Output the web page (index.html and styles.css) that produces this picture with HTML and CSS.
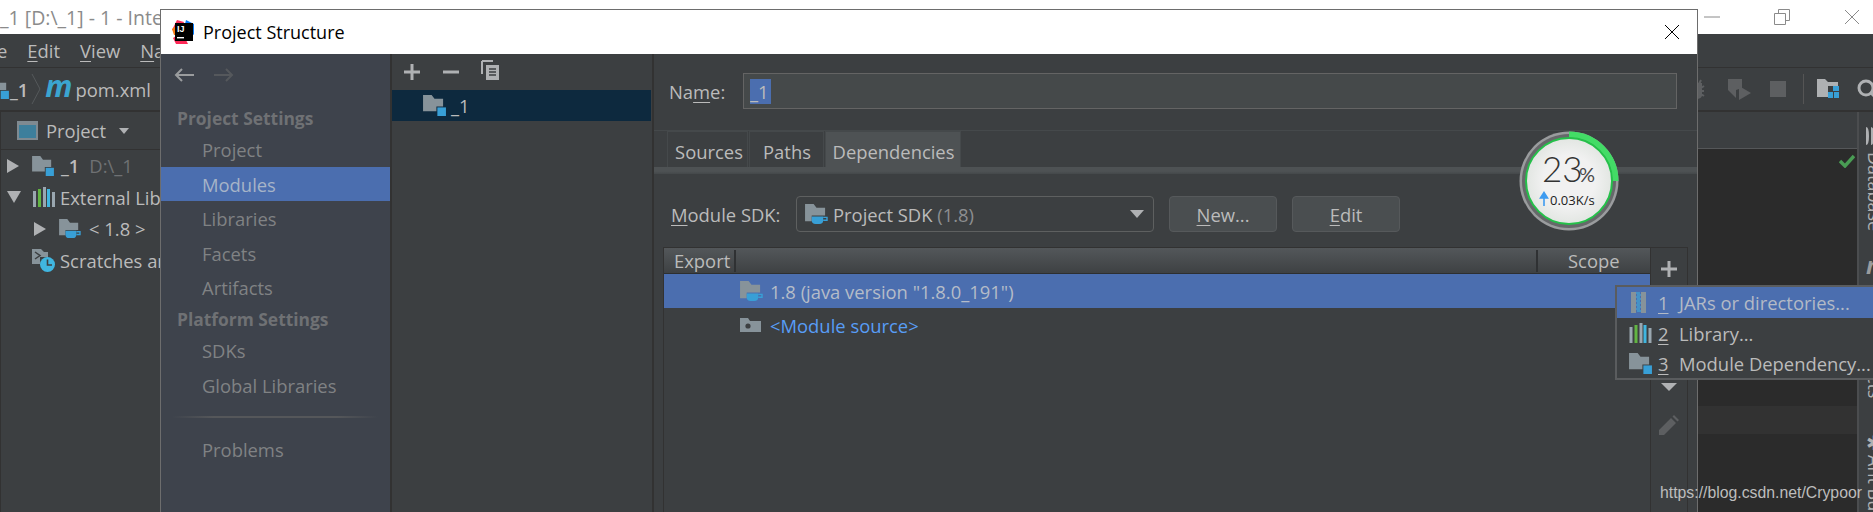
FILE: index.html
```html
<!DOCTYPE html>
<html lang="en">
<head>
<meta charset="utf-8">
<title>Project Structure</title>
<link rel="stylesheet" href="styles.css">
</head>
<body>
<svg class="sprite" aria-hidden="true">
  <symbol id="i-module" viewBox="0 0 24 22">
    <path d="M0 0H9L12 4H21V12H14V17H0Z" fill="#87939a"/>
    <rect x="15" y="13" width="9" height="9" fill="#389fd6"/>
  </symbol>
  <symbol id="i-sdk" viewBox="0 0 24 22">
    <path d="M0 0H9L12 4H21V12H7V18H0Z" fill="#87939a"/>
    <path d="M7 13H19V17Q19 21 15 21H11Q7 21 7 17Z" fill="#389fd6"/>
    <path d="M19 14H23V17H19" fill="none" stroke="#389fd6" stroke-width="1.5"/>
  </symbol>
  <symbol id="i-source" viewBox="0 0 21 14">
    <path d="M0 0H8L10 3H21V14H0Z" fill="#87939a"/>
    <circle cx="8" cy="8" r="2.6" fill="#3c3f41"/>
  </symbol>
  <symbol id="i-lib" viewBox="0 0 22 20">
    <rect x="0" y="4" width="3" height="16" fill="#9aa7b0"/>
    <rect x="5" y="2" width="3" height="18" fill="#62b543"/>
    <rect x="10" y="0" width="3" height="20" fill="#9aa7b0"/>
    <rect x="14" y="2" width="3" height="18" fill="#40b6e0"/>
    <rect x="19" y="5" width="3" height="15" fill="#9aa7b0"/>
  </symbol>
  <symbol id="i-jar" viewBox="0 0 15 21">
    <rect x="0" y="0" width="5" height="21" fill="#87939a"/>
    <rect x="10" y="0" width="5" height="21" fill="#87939a"/>
    <path d="M5 1H9M6 3H10M5 5H9M6 7H10M5 9H9M6 11H10M5 13H9M6 15H10M5 17H9M6 19H10" stroke="#40b6e0" stroke-width="1.2"/>
  </symbol>
  <symbol id="i-scratch" viewBox="0 0 23 23">
    <path d="M0 0H9L12 3H16V8H8V15H0Z" fill="#87939a"/>
    <path d="M3 3L8 6.5L3 10" fill="none" stroke="#3c3f41" stroke-width="1.5"/>
    <circle cx="15.5" cy="15.5" r="7.5" fill="#40b6e0"/>
    <path d="M15.5 10.5V16H20" fill="none" stroke="#3c3f41" stroke-width="1.6"/>
  </symbol>
  <symbol id="i-plus" viewBox="0 0 16 16">
    <path d="M8 0V16M0 8H16" stroke="currentColor" stroke-width="3"/>
  </symbol>
</svg>

<div class="ide">
  <header class="titlebar">
    <span class="titlebar-text">_1 [D:\_1] - 1 - IntelliJ IDEA</span>
    <div class="wincontrols">
      <svg class="winbtn" viewBox="0 0 16 16"><path d="M0 8H16" stroke="#8a8a8a"/></svg>
      <svg class="winbtn" viewBox="0 0 16 16"><path d="M.5 4.5H11.5V15.5H.5Z M4.5 4.5V.5H15.5V11.5H11.5" fill="none" stroke="#8a8a8a"/></svg>
      <svg class="winbtn" viewBox="0 0 16 16"><path d="M1 1L15 15M15 1L1 15" stroke="#8a8a8a"/></svg>
    </div>
  </header>
  <nav class="menubar">
    <span class="menu-clip">e</span>
    <span><u>E</u>dit</span>
    <span><u>V</u>iew</span>
    <span><u>N</u>avigate</span>
  </nav>
  <div class="navbar">
    <div class="crumbs">
      <svg class="crumb-icon"><use href="#i-module"/></svg>
      <b class="crumb-name">_1</b>
      <svg class="chev" viewBox="0 0 10 32"><path d="M1 1L9 16L1 31" fill="none" stroke="#55595b"/></svg>
      <i class="maven">m</i>
      <span>pom.xml</span>
    </div>
    <div class="tools">
      <svg class="tool-bug" viewBox="0 0 20 20"><path d="M5 5H15V16Q15 19 10 19T5 16Z M2 7L5 9M2 12H5M2 17L5 15M18 7L15 9M18 12H15M18 17L15 15M7 5L5 1M13 5L15 1" fill="#5d5f61" stroke="#5d5f61" stroke-width="2"/></svg>
      <svg class="tool-cov" viewBox="0 0 23 22"><path d="M0 1H14V10L8 12V20L0 12Z" fill="#5d5f61"/><path d="M11 8L23 15L11 22Z" fill="#5d5f61"/></svg>
      <span class="tool-stop"></span>
      <span class="tool-sep"></span>
      <svg class="tool-folder" viewBox="0 0 22 20"><path d="M0 0H8L11 3H21V7H11V18H0Z" fill="#afb1b3"/><path d="M16 7H22V12H16ZM11 13H16V19H11ZM17 13H22V19H17Z" fill="#389fd6"/></svg>
      <svg class="tool-search" viewBox="0 0 20 20"><circle cx="9" cy="9" r="7" fill="none" stroke="#afb1b3" stroke-width="3"/><path d="M14 14L20 20" stroke="#afb1b3" stroke-width="3"/></svg>
    </div>
  </div>
  <div class="workspace">
    <aside class="project">
      <div class="project-head">
        <span class="project-glyph"></span>
        <span>Project</span>
        <span class="caret"></span>
      </div>
      <div class="tree-row"><span class="tri-r"></span><svg class="tree-icon"><use href="#i-module"/></svg><b class="tree-bold">_1</b><span class="tree-dim">D:\_1</span></div>
      <div class="tree-row"><span class="tri-d"></span><svg class="tree-icon tree-lib"><use href="#i-lib"/></svg><span>External Libraries</span></div>
      <div class="tree-row tree-sub"><span class="tri-r"></span><svg class="tree-icon"><use href="#i-sdk"/></svg><span>&lt; 1.8 &gt;</span></div>
      <div class="tree-row"><svg class="tree-icon tree-scratch"><use href="#i-scratch"/></svg><span>Scratches and Consoles</span></div>
    </aside>
    <main class="editor">
      <div class="editor-tabs"></div>
      <div class="editor-body">
        <svg class="check" viewBox="0 0 16 14"><path d="M1 7L6 12L15 2" fill="none" stroke="#499c54" stroke-width="3.4"/></svg>
        <div class="caret-line"></div>
      </div>
    </main>
    <aside class="strip">
      <svg class="strip-db" viewBox="0 0 18 18"><path d="M0 0Q3 0 3 9T0 18ZM5 0Q8 0 8 9T5 18ZM10 0Q13 0 13 9T10 18Z" fill="#afb1b3"/></svg>
      <span class="strip-label strip-database">Database</span>
      <i class="strip-m">m</i>
      <span class="strip-label strip-facts">Artifacts</span>
      <span class="strip-ant">✱</span>
      <span class="strip-label">Ant Build</span>
    </aside>
  </div>
</div>

<section class="dialog">
  <header class="dialog-title">
    <svg class="logo" viewBox="0 0 22 24">
      <path d="M5 0L12 2L9 12L0 10Z" fill="#fe315d"/>
      <path d="M0 9L5 5L7 15L2 15Z" fill="#f97a12"/>
      <path d="M14 0L22 4V15L12 8Z" fill="#087cfa"/>
      <path d="M1 18L10 12L16 24H4Z" fill="#fe2857"/>
      <rect x="3" y="3" width="18" height="18" fill="#000"/>
      <text class="logo-text" x="5" y="12">IJ</text>
      <rect x="5" y="17" width="7" height="1.4" fill="#fff"/>
    </svg>
    <span class="dialog-name">Project Structure</span>
    <svg class="dialog-close" viewBox="0 0 16 16"><path d="M1 1L15 15M15 1L1 15" stroke="#000"/></svg>
  </header>
  <div class="dialog-body">
    <nav class="sidebar">
      <div class="history">
        <svg class="hist" viewBox="0 0 20 14"><path d="M20 7H2M8 1L2 7L8 13" fill="none" stroke="#9a9c9e" stroke-width="2"/></svg>
        <svg class="hist" viewBox="0 0 20 14"><path d="M0 7H18M12 1L18 7L12 13" fill="none" stroke="#55585c" stroke-width="2"/></svg>
      </div>
      <div class="side-head">Project Settings</div>
      <a class="side-item">Project</a>
      <a class="side-item is-selected">Modules</a>
      <a class="side-item">Libraries</a>
      <a class="side-item">Facets</a>
      <a class="side-item">Artifacts</a>
      <div class="side-head side-head-2">Platform Settings</div>
      <a class="side-item">SDKs</a>
      <a class="side-item">Global Libraries</a>
      <div class="side-sep"></div>
      <a class="side-item">Problems</a>
    </nav>
    <div class="modules">
      <div class="modules-tools">
        <svg class="mt-plus"><use href="#i-plus"/></svg>
        <svg class="mt-minus" viewBox="0 0 16 4"><path d="M0 2H16" stroke="#afb1b3" stroke-width="3"/></svg>
        <svg class="mt-copy" viewBox="0 0 18 20"><path d="M1 1H12" stroke="#afb1b3" stroke-width="2" fill="none"/><path d="M1 1V14" stroke="#afb1b3" stroke-width="2"/><path d="M5 5H18V20H5Z" fill="#afb1b3"/><path d="M8 9H15M8 12H15M8 15H15" stroke="#3c3f41" stroke-width="1.3"/></svg>
      </div>
      <div class="module-row"><svg class="module-icon"><use href="#i-module"/></svg><span>_1</span></div>
    </div>
    <div class="detail">
      <div class="name-row">
        <label class="name-label">Na<u>m</u>e:</label>
        <div class="name-input"><span class="name-sel">_1</span></div>
      </div>
      <div class="tabs">
        <span class="tab tab-sources">Sources</span>
        <span class="tab tab-paths">Paths</span>
        <span class="tab tab-deps is-active">Dependencies</span>
      </div>
      <div class="tab-band"></div>
      <div class="sdk-row">
        <label class="sdk-label"><u>M</u>odule SDK:</label>
        <div class="sdk-select">
          <svg class="sdk-icon"><use href="#i-sdk"/></svg>
          <span>Project SDK <span class="muted">(1.8)</span></span>
          <span class="sdk-caret"></span>
        </div>
        <button class="btn"><u>N</u>ew...</button>
        <button class="btn"><u>E</u>dit</button>
      </div>
      <div class="deps">
        <div class="table">
          <div class="thead">
            <span class="th-export">Export</span>
            <span class="th-fill"></span>
            <span class="th-scope">Scope</span>
          </div>
          <div class="trow is-selected"><svg class="dep-icon"><use href="#i-sdk"/></svg><span>1.8 (java version "1.8.0_191")</span></div>
          <div class="trow"><svg class="dep-src"><use href="#i-source"/></svg><span class="link">&lt;Module source&gt;</span></div>
        </div>
        <div class="table-tools">
          <svg class="tt-plus"><use href="#i-plus"/></svg>
          <span class="tt-down"></span>
          <svg class="tt-edit" viewBox="0 0 20 20"><path d="M0 20V15L12 3L17 8L5 20Z M13.5 1.5L15 0L20 5L18.5 6.5Z" fill="#5d5f61"/></svg>
        </div>
      </div>
    </div>
  </div>
</section>

<svg class="speed" viewBox="0 0 100 100">
  <defs>
    <radialGradient id="disc"><stop offset="0.6" stop-color="#f1f1f1"/><stop offset="1" stop-color="#e2e6e2"/></radialGradient>
  </defs>
  <circle cx="50" cy="50" r="49.5" fill="#9a9c9e"/>
  <circle cx="50" cy="50" r="47" fill="#66686a"/>
  <path d="M50 3.5A46.5 46.5 0 0 1 96.5 50" fill="none" stroke="#43dc66" stroke-width="6"/>
  <circle cx="50" cy="50" r="43" fill="url(#disc)" stroke="#25c04a" stroke-width="2"/>
  <text class="speed-num" x="23" y="51">23</text>
  <text class="speed-pct" x="60" y="51">%</text>
  <path d="M25 75V66M21.5 67L25 61.5L28.5 67Z" stroke="#3d9bf0" stroke-width="1.6" fill="#3d9bf0"/>
  <text class="speed-rate" x="31" y="74">0.03K/s</text>
</svg>

<div class="popup">
  <div class="pop-row is-selected"><svg class="pop-jar"><use href="#i-jar"/></svg><u class="pop-num">1</u><span>JARs or directories...</span></div>
  <div class="pop-row"><svg class="pop-icon pop-lib"><use href="#i-lib"/></svg><u class="pop-num">2</u><span>Library...</span></div>
  <div class="pop-row"><svg class="pop-icon"><use href="#i-module"/></svg><u class="pop-num">3</u><span>Module Dependency...</span></div>
</div>

<div class="watermark">https://blog.csdn.net/Crypoor</div>
</body>
</html>
```
FILE: styles.css
```css
* { box-sizing: border-box; }
html, body { margin: 0; height: 512px; overflow: hidden; }
body {
  position: relative;
  width: 1873px;
  background: #3c3f41;
  color: #bbbbbb;
  font-family: "Open Sans", "Noto Sans", "Liberation Sans", sans-serif;
  font-size: 18.4px;
}
u { text-underline-offset: 3px; }
.sprite { display: none; }

/* IDE behind the dialog */
.ide { display: flex; flex-direction: column; height: 512px; }
.titlebar {
  height: 34px; flex: none; background: #fff; color: #8b8b8b;
  display: flex; align-items: center; justify-content: space-between;
  font-size: 19.5px; white-space: nowrap;
}
.wincontrols { display: flex; align-items: center; gap: 54px; padding-right: 13px; }
.winbtn { width: 16px; height: 16px; display: block; }
.menubar {
  height: 34px; flex: none; border-bottom: 1px solid #323232;
  display: flex; align-items: center; gap: 20px; color: #bbb;
  white-space: nowrap;
}
.menubar .menu-clip { margin-left: -3px; }
.navbar {
  height: 44px; flex: none; border-bottom: 2px solid #323232;
  display: flex; align-items: center; justify-content: space-between;
}
.crumbs { display: flex; align-items: center; white-space: nowrap; }
.crumb-icon { width: 22px; height: 20px; margin-left: -13px; }
.crumb-name { margin-left: 1px; font-weight: 600; }
.chev { width: 10px; height: 32px; margin: 0 4px 0 3px; }
.maven { color: #3ba5d0; font: italic 700 30px/1 "Open Sans", sans-serif; margin: -6px 3px 0 0; }
.tools { display: flex; align-items: center; }
.tool-bug { width: 20px; height: 20px; margin-right: 22px; }
.tool-cov { width: 23px; height: 22px; margin-right: 19px; }
.tool-stop { width: 16px; height: 16px; background: #5d5f61; margin-right: 17px; }
.tool-sep { width: 1px; height: 30px; background: #555; margin-right: 13px; }
.tool-folder { width: 22px; height: 20px; margin-right: 18px; }
.tool-search { width: 20px; height: 20px; margin-right: -4px; }
.workspace { flex: 1; display: flex; min-height: 0; }

.project { width: 1697px; flex: none; border-left: 1px solid #323232; overflow: hidden; }
.project-head {
  height: 38px; border-bottom: 1px solid #323232;
  display: flex; align-items: center; gap: 8px; padding-left: 16px;
}
.project-glyph { width: 21px; height: 19px; background: #3d7f9c; border: 2px solid #7f8a91; border-top-width: 4px; }
.caret { width: 0; height: 0; border: 5px solid transparent; border-top: 6px solid #afb1b3; margin: 6px 0 0 5px; }
.tree-row { height: 31.5px; display: flex; align-items: center; white-space: nowrap; padding-left: 6px; }
.tree-sub { padding-left: 33px; }
.tri-r { width: 0; height: 0; border: 7px solid transparent; border-left: 12px solid #afb1b3; border-right: 0; margin-right: 13px; }
.tri-d { width: 0; height: 0; border: 7px solid transparent; border-top: 12px solid #afb1b3; border-bottom: 0; margin-right: 12px; }
.tree-icon { width: 22px; height: 20px; margin-right: 7px; flex: none; }
.tree-lib { margin-right: 5px; }
.tree-sub .tree-icon { margin-right: 8px; }
.tree-scratch { width: 23px; height: 23px; margin-left: 25px; margin-right: 5px; }
.tree-bold { font-weight: 600; margin-right: 10px; }
.tree-dim { color: #6f7173; }

.editor { width: 160px; flex: none; display: flex; flex-direction: column; }
.editor-tabs { height: 37px; flex: none; border-bottom: 1px solid #555759; }
.editor-body { flex: 1; background: #2b2b2b; padding-top: 0; display: flex; flex-direction: column; }
.check { width: 16px; height: 14px; align-self: flex-end; margin: 5px 2px 0 0; }
.caret-line { height: 28px; background: #323232; margin-top: 238px; }

.strip {
  width: 16px; flex: none; border-left: 2px solid #4b4d4f; overflow: hidden;
  display: flex; flex-direction: column; align-items: flex-start; padding-left: 7px; color: #afb1b3;
}
.strip-db { width: 18px; height: 18px; flex: none; margin: 15px 0 0 0; }
.strip-label { writing-mode: vertical-rl; white-space: nowrap; font-size: 18px; line-height: 18px; flex: none; }
.strip-database { margin-top: 7px; }
.strip-m { font: italic 700 24px/1 "Open Sans", sans-serif; flex: none; margin-top: 22px; color: #9a9c9e; }
.strip-facts { margin-top: 52px; }
.strip-ant { font-size: 20px; line-height: 24px; flex: none; margin-top: 32px; }

/* Dialog */
.dialog {
  position: absolute; left: 160px; top: 9px; width: 1538px; height: 503px;
  border: 1px solid #6d6d6d; border-bottom: 0; background: #3c3f41;
  display: flex; flex-direction: column;
}
.dialog-title {
  height: 44px; flex: none; background: #fff; color: #000;
  display: flex; align-items: center; padding-left: 11px; font-size: 18px;
}
.logo { width: 22px; height: 24px; margin-right: 9px; }
.logo-text { font: 700 9px "Liberation Sans", sans-serif; fill: #fff; }
.dialog-name { flex: 1; }
.dialog-close { width: 16px; height: 16px; margin-right: 17px; }
.dialog-body { flex: 1; display: flex; min-height: 0; }

.sidebar {
  width: 231px; flex: none; background: #3e434c; color: #808284;
  border-right: 2px solid #323232; display: flex; flex-direction: column;
}
.history { height: 50px; flex: none; display: flex; align-items: center; gap: 20px; padding: 0 0 8px 13px; }
.hist { width: 20px; height: 14px; }
.side-head { height: 28px; flex: none; line-height: 29px; padding-left: 16px; font-weight: 700; font-size: 17.4px; color: #6f7174; }
.side-item { height: 34.6px; flex: none; line-height: 35px; padding-left: 41px; display: block; }
.side-item.is-selected { background: #4b6eaf; color: #a6b4c8; }
.side-sep {
  height: 2px; flex: none; margin: 14px 12px 14px 11px;
  background: linear-gradient(90deg, #3e434c, #55575a 20%, #55575a 80%, #3e434c);
}

.modules { width: 262px; flex: none; border-right: 2px solid #323232; }
.modules-tools { height: 36px; display: flex; align-items: center; padding: 0 0 0 12px; color: #afb1b3; }
.mt-plus { width: 16px; height: 16px; margin-right: 23px; }
.mt-minus { width: 16px; height: 4px; margin-right: 22px; }
.mt-copy { width: 18px; height: 20px; margin-top: -4px; }
.module-row { height: 31px; background: #0d293e; display: flex; align-items: center; padding-left: 31px; margin-right: 1px; }
.module-icon { width: 23px; height: 21px; margin-right: 5px; }

.detail { flex: 1; min-width: 0; display: flex; flex-direction: column; }
.name-row { margin-top: 19px; height: 36px; flex: none; display: flex; align-items: center; padding: 0 20px 0 15px; }
.name-label { width: 74px; flex: none; }
.name-input { flex: 1; height: 36px; background: #45494a; border: 1px solid #646464; padding-left: 6px; display: flex; align-items: center; }
.name-sel { background: #4b6eaf; width: 21px; height: 25px; line-height: 25px; overflow: hidden; white-space: nowrap; }
.tabs { margin-top: 21px; height: 37px; flex: none; display: flex; padding-left: 13px; border-top: 1px solid #45494b; }
.tab { display: flex; align-items: center; justify-content: center; padding: 3px 0 0 1px; background: #3c3f41; border: 1px solid #45494b; border-bottom: 0; }
.tab-sources { width: 81px; margin-right: 1px; padding-left: 3px; }
.tab-paths { width: 75px; margin-right: 1px; }
.tab-deps { width: 136px; }
.tab.is-active { background: #4e5254; }
.tab-band { height: 7px; flex: none; background: linear-gradient(#4e5254 60%, #44484a); }
.sdk-row { margin-top: 22px; height: 36px; flex: none; display: flex; align-items: center; padding-left: 17px; }
.sdk-label { width: 125px; flex: none; }
.sdk-select {
  width: 358px; height: 36px; flex: none; border: 1px solid #5e6060; border-radius: 4px;
  display: flex; align-items: center; padding-left: 8px; background: #3c3f41; margin-right: 15px;
}
.sdk-icon { width: 23px; height: 21px; margin-right: 5px; flex: none; }
.sdk-caret { width: 0; height: 0; border: 7px solid transparent; border-top: 8px solid #afb1b3; border-bottom: 0; margin-left: auto; margin-right: 9px; }
.muted { color: #8c8e90; }
.btn {
  width: 108px; height: 36px; flex: none; margin-right: 15px; padding: 0;
  font: inherit; color: #bbb; background: #4a4e50; border: 1px solid #56595b; border-radius: 4px;
}
.deps { margin-top: 15px; flex: 1; min-height: 0; display: flex; padding: 0 9px 0 9px; }
.table { flex: 1; min-width: 0; border-left: 1px solid #323232; border-top: 1px solid #323232; }
.thead {
  height: 26px; display: flex; align-items: center;
  background: linear-gradient(#53575a, #3e4143); border-bottom: 1px solid #2d2f30;
}
.th-export { width: 72px; flex: none; padding-left: 10px; border-right: 2px solid #2f3133; line-height: 22px; }
.th-fill { flex: 1; }
.th-scope { width: 114px; flex: none; padding-left: 30px; border-left: 2px solid #2f3133; line-height: 22px; }
.trow { height: 34px; display: flex; align-items: center; padding-left: 76px; white-space: nowrap; }
.trow.is-selected { background: #4b6eaf; color: #b5bcc8; }
.dep-icon { width: 23px; height: 21px; margin-right: 7px; }
.dep-src { width: 21px; height: 14px; margin-right: 9px; }
.link { color: #589df6; }
.table-tools {
  width: 38px; flex: none; border: 1px solid #323232; border-bottom: 0;
  display: flex; flex-direction: column; align-items: center; color: #afb1b3; padding-top: 13px;
}
.tt-plus { width: 16px; height: 16px; }
.tt-down { width: 0; height: 0; border: 8px solid transparent; border-top: 8px solid #afb1b3; border-bottom: 0; margin-top: 106px; }
.tt-edit { width: 20px; height: 20px; margin-top: 24px; }

/* Overlays */
.speed { position: absolute; left: 1519px; top: 131px; width: 100px; height: 100px; }
.speed-num { font: 300 35px "Lato", sans-serif; fill: #333; }
.speed-pct { font: 400 20px "Lato", sans-serif; fill: #4a4a4a; }
.speed-rate { font: 400 13px "Open Sans", sans-serif; fill: #222; }

.popup {
  position: absolute; left: 1615px; top: 285px; width: 260px; height: 95px;
  background: #3c3f41; border: 2px solid #5a5c5e;
}
.pop-row { height: 30px; display: flex; align-items: center; white-space: nowrap; }
.pop-row.is-selected { height: 31px; background: #4b6eaf; color: #b3bac6; }
.pop-icon { width: 23px; height: 21px; margin-left: 12px; margin-right: 6px; flex: none; }
.pop-lib { height: 20px; }
.pop-jar { width: 15px; height: 21px; margin-left: 14px; margin-right: 12px; flex: none; }
.pop-num { width: 21px; flex: none; }

.watermark {
  position: absolute; left: 1660px; top: 483px; color: #bdbdbd;
  font: 15.8px/20px "Liberation Sans", Arial, sans-serif; white-space: nowrap;
}
```
